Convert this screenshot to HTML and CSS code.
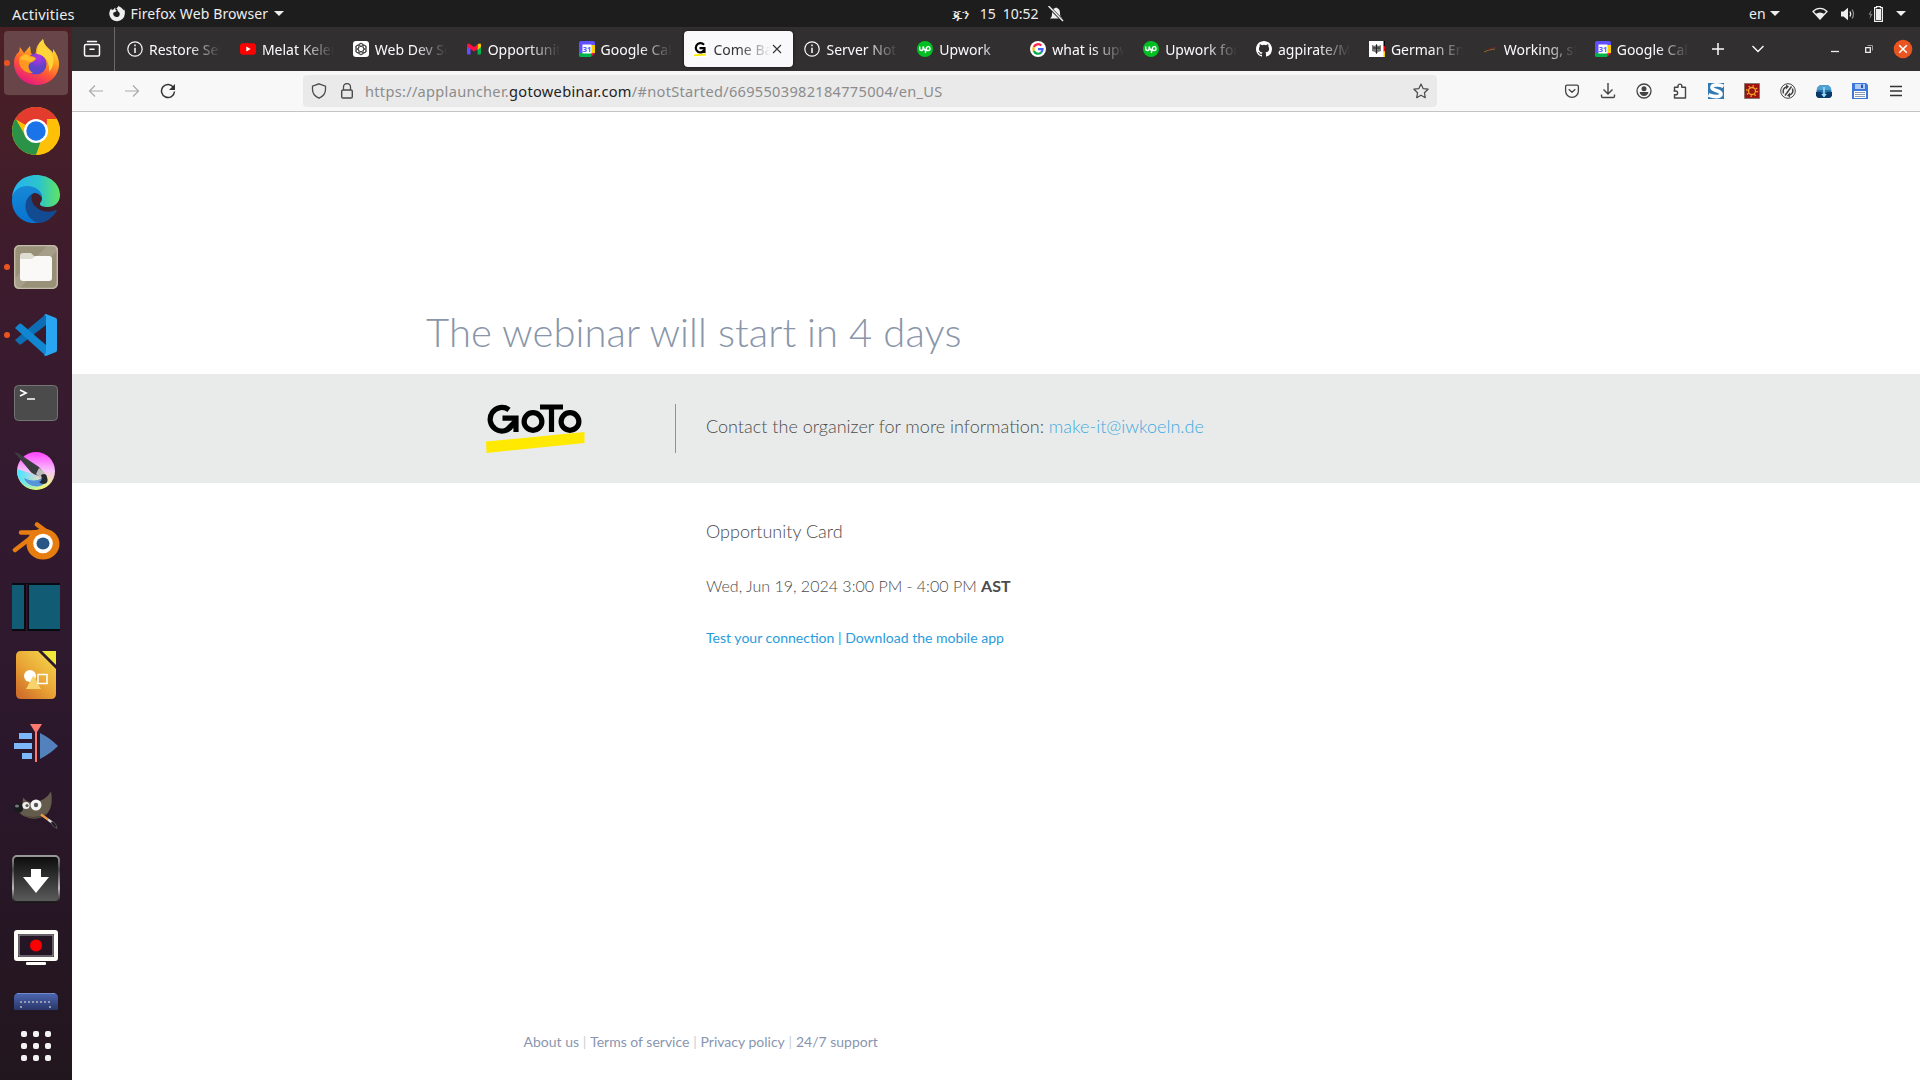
FILE: index.html
```html
<!DOCTYPE html>
<html lang="en">
<head>
<meta charset="utf-8">
<title>Come Back Later</title>
<link rel="stylesheet" href="styles.css">
</head>
<body>
<header class="panel">
  <span class="activities">Activities</span>
  <svg class="panel-fox" width="16" height="16" viewBox="0 0 16 16"><path fill="#eee" d="M7.2 2.4C8 1.700 9 1.600 9.100 0c2.500 1 4.400 2.500 5.400 4.300l.5-1c1 1.500 1 3 .8 4.700A7.800 7.800 0 0 1 .3 8.500C.2 6.200 1 4 2.200 2.600l.6 1.400 1.700-.4 1.700-2.100.3 2.400 1.200.8-1.500 1.400-1.700.4C4 7.400 4 9 5.400 10.200c1.600 1.300 4 1 5-.8.7-1.500.3-2.800-.9-3.700L8.600 5c.4-.9-.2-2-1.400-2.600z"/></svg>
  <span class="app-name">Firefox Web Browser</span>
  <i class="caret"></i>
  <div class="clock"><span class="month">ጁን</span><span class="day">15</span><span class="time">10:52</span>
    <svg width="16" height="16" viewBox="0 0 16 16"><path fill="#eee" d="M2 12.500c2-1.500 2-3 2-5.500 0-3 1.500-4.500 3.200-5a1 1 0 0 1 1.800 0C11 2.500 12 4.500 12 7c0 2.500.5 4 2.500 5.500z"/><path stroke="#1d1d1d" stroke-width="3" d="M0 0l15 15"/><path stroke="#eee" stroke-width="1.500" d="M.5 0l14.500 15"/></svg>
  </div>
  <div class="status">
    <span>en</span><i class="caret"></i>
    <svg class="wifi" width="16" height="14" viewBox="0 0 16 14"><path fill="none" stroke="#eee" stroke-width="1.300" d="M1 4.500C5 .3 11 .3 15 4.500L8 12z"/><path fill="#eee" d="M3.500 7c3-2 6-2 9 0L8 12.500z"/></svg>
    <svg class="volume" width="16" height="14" viewBox="0 0 16 14"><path fill="#eee" d="M1 4.500h2.500L8 .8v12.400L3.500 9.500H1z"/><path fill="none" stroke="#eee" stroke-width="1.400" d="M10 4.500q1.500 2.500 0 5"/><path fill="none" stroke="#888" stroke-width="1.300" d="M12 2.500q3 4.500 0 9"/></svg>
    <svg class="battery" width="16" height="16" viewBox="0 0 16 16"><path fill="#888" d="M3.500 4L.5 8.500h2L1.500 13l3-5h-2z"/><path fill="#eee" d="M8 3h5v11H8z"/><path fill="none" stroke="#eee" stroke-width="1.200" d="M6.600 1.600h1.900V.6h4v1h1.900v13.800H6.600z"/></svg>
    <i class="caret"></i>
  </div>
</header>

<div class="desktop">
<nav class="dock">
  <div class="dock-list">
    <div class="app running focused"><svg viewBox="0 0 48 48"><defs><linearGradient id="fx" x1=".8" y1="0" x2=".3" y2="1"><stop offset="0" stop-color="#fff44f"/><stop offset=".35" stop-color="#ffab1e"/><stop offset=".65" stop-color="#ff5634"/><stop offset="1" stop-color="#e31587"/></linearGradient><radialGradient id="fxg" cx=".6" cy=".2"><stop offset="0" stop-color="#b833e1"/><stop offset="1" stop-color="#5b45c9"/></radialGradient></defs><path fill="url(#fx)" d="M31 0c1 6 3 7 6 10 2 1 3 3 4 4v-4c4 5 6 10 6 15 0 12-10 21-22 21S2 37 2 24c0-5 2-9 5-11l1-5 4 6 6-7 1 7 3 3 2-4c0-6 4-10 7-13z"/><circle cx="24" cy="25" r="10.500" fill="url(#fxg)"/><path fill="#ff9821" d="M7 21c1-7 8-8 12-4 2 0 4 1 5 3-1 2-4 3-6 4-3 3-1 8 3 10-8 1-14-5-14-13z"/><path fill="#ffd43a" d="M25 15c0-6 3-10 6-15 1 7 5 8 8 13 4 7 3 15-2 20 1-7-2-17-12-18z"/><path fill="#ffbd2e" d="M8 20c2-4 7-6 10-2l6 1-5 4z"/></svg></div>
    <div class="app"><svg viewBox="0 0 48 48"><circle cx="24" cy="24" r="24" fill="#ffc107"/><path fill="#e33b2e" d="M24 24L3.200 12A24 24 0 0 1 44.800 12z"/><path fill="#2b9347" d="M3.500 11.500L14 30l10 6 5.500-4L24 48A24 24 0 0 1 3.500 11.500z"/><path fill="#ffc107" d="M24 48l10.500-18L35 12h9.800A24 24 0 0 1 24 48z"/><circle cx="24" cy="24" r="12" fill="#fff"/><circle cx="24" cy="24" r="9.700" fill="#1a73e8"/></svg></div>
    <div class="app"><svg viewBox="0 0 48 48"><defs><linearGradient id="eg"><stop offset="0" stop-color="#27b3f3"/><stop offset=".55" stop-color="#2bc3cd"/><stop offset="1" stop-color="#5fe463"/></linearGradient><linearGradient id="eb" x2="0" y2="1"><stop stop-color="#1689d5"/><stop offset="1" stop-color="#0873d1"/></linearGradient></defs><path fill="url(#eg)" d="M0 23C1 9 11 0 24 0c14 0 24 9 24 20 0 8-6 12-12 12-5 0-8-1-8-3 0-2 2-2 2-6 0-6-6-11-14-11C7 12 2 17 0 23z"/><path fill="url(#eb)" d="M0 24C1 16 7 11 15 11c9 0 15 5 15 12-2-4-5-5-8-5-6 3-9 8-7 15 2 8 8 12 15 14-17 5-31-7-30-23z"/><path fill="#124b91" d="M22 18c-4 2-3 9 1 13 5 6 14 7 21 4 1 0 1 1 0 2-4 6-9 10-17 11-13-2-20-23-5-30z"/></svg></div>
    <div class="app running"><svg viewBox="0 0 48 48"><rect x="2" y="2" width="44" height="44" rx="5" fill="#999078"/><path d="M2 36L36 2h5a5 5 0 0 1 5 5L7 46q-5 0-5-5z" fill="#a69e88"/><rect x="2.700" y="2.700" width="42.600" height="42.600" rx="5" fill="none" stroke="#c4bdaa" stroke-width="1.300"/><path d="M8 13q0-3 3-3h8l4 4-3 4H8z" fill="#dfdcd1"/><path fill="#faf9f7" d="M8 16h12l3-3h14q3 0 3 3v19q0 3-3 3H11q-3 0-3-3z"/></svg></div>
    <div class="app running"><svg viewBox="0 0 48 48"><path fill="#0d6db5" d="M3 29l4 4q1 1 2.500 0L34 14V3z"/><path fill="#1187d1" d="M3 17l4-4q1-1 2.500 0L34 34v11z"/><path fill="#29a5f2" d="M34 3l10 4q1 .5 1 2v30q0 1.500-1 2l-10 4q-1 0-2-1l2-2V5l-2-1z"/></svg></div>
    <div class="app"><svg viewBox="0 0 48 48"><rect x="2.500" y="6.500" width="43" height="35" rx="4" fill="#4b4b4b" stroke="#747474"/><path d="M8 11l6 3-6 3M15 20h8" fill="none" stroke="#fff" stroke-width="1.700"/></svg></div>
    <div class="app"><svg viewBox="0 0 48 48"><defs><linearGradient id="kr" x1=".5" y1="0" x2=".5" y2="1"><stop offset="0" stop-color="#ff42ff"/><stop offset=".5" stop-color="#f7c4fa"/><stop offset="1" stop-color="#edff65"/></linearGradient><linearGradient id="kc"><stop offset="0" stop-color="#3fe8ff"/><stop offset=".8" stop-color="#3fe8ff" stop-opacity="0"/></linearGradient></defs><circle cx="24" cy="24" r="19" fill="url(#kr)"/><path fill="url(#kc)" d="M5 22l19 6 12 10A19 19 0 0 1 5 22z"/><path fill="#5694dc" d="M12 31q10 5 18 0l4 3q-3 7-13 5-7-2-9-8z"/><path fill="#3b3c3f" d="M2 5l4 1 21 14 4 5-4 4q-7-2-9-5z"/><path fill="#bbb" d="M27 21l6 5-5 5-4-4z"/><path fill="#25282c" d="M29 28q5-3 6 2 2 6-3 7-3 0-5-2 4-1 2-7z"/></svg></div>
    <div class="app"><svg viewBox="0 -6 48 48"><path fill="none" stroke="#e77d10" stroke-width="4.500" stroke-linecap="round" stroke-linejoin="round" d="M25 3.500l12 9M9 11.500h24M3 29l17-13"/><ellipse cx="31" cy="23" rx="16.500" ry="15.500" fill="#e77d10"/><path fill="#e77d10" d="M20 9.300h14l8 7-22 11-4-9z"/><circle cx="31" cy="22.500" r="9.800" fill="#fff"/><ellipse cx="31" cy="22.500" rx="6.500" ry="6" fill="#265787"/></svg></div>
    <div class="app"><svg viewBox="0 0 48 48"><path fill="#050b10" d="M0 0h48v48H0z"/><path fill="#125b74" d="M0 2h12v44H0zM17 2h31v44H17z"/><path fill="#36132f" d="M14 1h1.500v47H14z"/></svg></div>
    <div class="app"><svg viewBox="0 0 48 48"><defs><linearGradient id="dr" x1="1" y1="0" x2=".2" y2="1"><stop stop-color="#f4de50"/><stop offset=".6" stop-color="#e9a334"/><stop offset="1" stop-color="#d0702a"/></linearGradient></defs><path fill="url(#dr)" d="M9 0h17l18 18v25q0 5-5 5H9q-5 0-5-5V5q0-5 5-5z"/><path fill="#f2e83a" d="M30 0h14v14z"/><circle cx="18" cy="25" r="6" fill="#fff"/><path d="M21.500 24.500L29 38H14z" fill="#f6d36d"/><rect x="26" y="23.500" width="9" height="9" fill="none" stroke="#fff" stroke-width="1.500"/></svg></div>
    <div class="app"><svg viewBox="0 0 48 48"><path fill="#7cb7fa" d="M7 14h13v6H7zM2 24h18v6H2zM10 34h10v6H10z"/><path fill="#5281bb" d="M28 14q10 5 18 13-8 8-18 13z"/><path fill="#fb7970" d="M18 5h12l-5 8v30h-2V13z"/></svg></div>
    <div class="app"><svg viewBox="0 -4.500 48 48"><path fill="#635b4c" d="M11 6q4 5 10 5 12-1 18-11 3 17-6 24-9 6-20 1-5-2-7-6 5-4 5-13z"/><path fill="#4a4338" d="M8 22q13 7 27 0-10 9-27 0z"/><ellipse cx="6.500" cy="16.500" rx="4.700" ry="5" fill="#191b1d"/><ellipse cx="5" cy="14.500" rx="2" ry="1.500" fill="#777"/><circle cx="14" cy="14" r="3.600" fill="#eee"/><circle cx="24" cy="13.500" r="5.500" fill="#f5f5f5"/><circle cx="15" cy="14" r="1.500" fill="#555"/><circle cx="24" cy="13.500" r="2.200" fill="#555"/><path stroke="#ee9a4d" stroke-width="2.300" d="M29 23l7 5"/><path stroke="#ddd" stroke-width="2.300" d="M36 28l4 3"/><path fill="#17191a" stroke="#777" stroke-width=".6" d="M40 30q4 1 5 7-5-2-6-6z"/></svg></div>
    <div class="app"><svg viewBox="0 0 48 48"><defs><linearGradient id="dl" x2="0" y2="1"><stop stop-color="#0b0b0b"/><stop offset="1" stop-color="#5c5c5c"/></linearGradient><linearGradient id="dlb" x2="0" y2="1"><stop stop-color="#999"/><stop offset=".3" stop-color="#444"/><stop offset=".7" stop-color="#bbb"/><stop offset="1" stop-color="#181818"/></linearGradient></defs><rect x="1" y="1" width="46" height="46" rx="4" fill="url(#dl)" stroke="url(#dlb)" stroke-width="2"/><path fill="#fff" d="M19 14h10v8h8L24 38 11 22h8z"/></svg></div>
    <div class="app"><svg viewBox="0 -1 48 48"><rect x="4" y="8" width="40" height="27" rx="1" fill="#251626" stroke="#fffef8" stroke-width="4"/><rect x="7" y="11" width="34" height="21" fill="none" stroke="#aaa"/><circle cx="24" cy="21.500" r="6" fill="#f00"/><rect x="14" y="38" width="20" height="3" rx="1" fill="#fffef8"/></svg></div>
    <div class="app"><svg viewBox="0 0 48 48"><defs><linearGradient id="kb" x2="0" y2="1"><stop stop-color="#4f69b5"/><stop offset="1" stop-color="#263263"/></linearGradient></defs><path fill="url(#kb)" d="M2 7q0-5 5-5h34q5 0 5 5v13H2z"/><path stroke="#7488c5" d="M5 2.500h38"/><path stroke="#969aaf" stroke-width="2" stroke-dasharray="2 2" d="M8 11h31M9 15v5M38 15v5"/></svg></div>
  </div>
  <div class="show-apps"><i></i><i></i><i></i><i></i><i></i><i></i><i></i><i></i><i></i></div>
</nav>

<section class="browser">
  <div class="tabbar">
    <div class="firefox-view"><svg width="18" height="18" viewBox="0 0 18 18"><path fill="none" stroke="#fbfbfe" stroke-width="1.500" stroke-linecap="round" d="M4.500 1.500h9M1.500 6q0-1.500 1.500-1.500h12q1.500 0 1.500 1.500v8.500q0 1.500-1.500 1.500H3q-1.500 0-1.500-1.500zM7 9.200h4"/></svg></div>
    <div class="tab"><svg class="fav" viewBox="0 0 16 16"><circle cx="8" cy="8" r="7.200" fill="none" stroke="#fbfbfe" stroke-width="1.200"/><path stroke="#fbfbfe" stroke-width="1.500" d="M8 3.500v1.800M8 6.700v5.300"/></svg><span>Restore Session</span></div>
    <div class="tab"><svg class="fav" viewBox="0 0 16 16"><rect y="2.300" width="16" height="11.400" rx="3" fill="#f00"/><path fill="#fff" d="M6.300 5.500v5L10.700 8z"/></svg><span>Melat Kelemwork</span></div>
    <div class="tab"><svg class="fav" viewBox="0 0 16 16"><rect width="16" height="16" rx="3" fill="#fff"/><g fill="none" stroke="#333" stroke-width=".8"><ellipse cx="8" cy="8" rx="2.500" ry="5.900"/><ellipse cx="8" cy="8" rx="2.500" ry="5.900" transform="rotate(60 8 8)"/><ellipse cx="8" cy="8" rx="2.500" ry="5.900" transform="rotate(120 8 8)"/><circle cx="8" cy="8" r="5.300"/></g></svg><span>Web Dev Schedule</span></div>
    <div class="tab"><svg class="fav" viewBox="0 0 16 16"><path fill="#6150ff" d="M1 4l3.500 2v7.500H2q-1 0-1-1z"/><path fill="#00b34a" d="M11.500 6L15 4v8.500q0 1-1 1h-2.500z"/><path fill="#ffc400" d="M11.500 3.500q3.500-2 3.500.5v2l-3.500 3z"/><path fill="#f14" d="M1 5q0-4 3.500-1.500L8 6l3.500-2.500V8L8 10.500 1 5.500z"/></svg><span>Opportunity Card</span></div>
    <div class="tab"><svg class="fav" viewBox="0 0 16 16"><path fill="#6150ff" d="M0 2q0-2 2-2h12q2 0 2 2v2H4v12H2q-2 0-2-2z"/><path fill="#fc0" d="M12 4h4v8h-4z"/><path fill="#00b34a" d="M0 12h12v4H2q-2 0-2-2z"/><path fill="#f14" d="M12 12h4l-4 4z"/><path fill="#fff" d="M3.500 3.500h9v9h-9z"/><text x="8" y="10.700" font-size="7.500" font-weight="700" text-anchor="middle" fill="#6150ff">31</text></svg><span>Google Calendar</span></div>
    <div class="tab active"><svg class="fav" viewBox="0 0 16 16"><path fill="#fff" d="M0 0h16v16H0z"/><path fill="none" stroke="#050505" stroke-width="2.200" d="M12 3.700A4.700 4.700 0 1 0 8 11.500q3 0 4-2.500M7.500 7.200h5V12"/><path fill="#ffe900" d="M2 13.500l12-1v2L2 15.300z"/></svg><span>Come Back Later</span><svg class="close" width="10" height="10" viewBox="0 0 10 10"><path stroke="#333" stroke-width="1.100" d="M1 1l8 8M9 1L1 9"/></svg></div>
    <div class="tab"><svg class="fav" viewBox="0 0 16 16"><circle cx="8" cy="8" r="7.200" fill="none" stroke="#fbfbfe" stroke-width="1.200"/><path stroke="#fbfbfe" stroke-width="1.500" d="M8 3.500v1.800M8 6.700v5.300"/></svg><span>Server Not Found</span></div>
    <div class="tab"><svg class="fav" viewBox="0 0 16 16"><circle cx="8" cy="8" r="8" fill="#00bf22"/><path fill="none" stroke="#fff" stroke-width="1.400" d="M2.700 5.500v2q0 2 1.700 2t1.700-2v-2q.8 3.500 2.800 4M8.300 12l1-4.500q.4-2 2-2t1.700 2-1.700 2q-1.400 0-2.400-1"/></svg><span>Upwork</span></div>
    <div class="tab"><svg class="fav" viewBox="0 0 16 16"><circle cx="8" cy="8" r="8" fill="#fff"/><g fill="none" stroke-width="2.200"><path stroke="#f24" d="M3.800 6A4.700 4.700 0 0 1 11.300 4.500"/><path stroke="#fb0" d="M3.800 6a5 5 0 0 0 0 4"/><path stroke="#0a4" d="M3.800 10a4.700 4.700 0 0 0 7.300 1.600"/><path stroke="#46f" d="M11.100 11.600q1.500-1.500 1.500-3.500H8"/></g></svg><span>what is upwork</span></div>
    <div class="tab"><svg class="fav" viewBox="0 0 16 16"><circle cx="8" cy="8" r="8" fill="#00bf22"/><path fill="none" stroke="#fff" stroke-width="1.400" d="M2.700 5.500v2q0 2 1.700 2t1.700-2v-2q.8 3.500 2.800 4M8.300 12l1-4.500q.4-2 2-2t1.700 2-1.700 2q-1.400 0-2.400-1"/></svg><span>Upwork for All</span></div>
    <div class="tab"><svg class="fav" viewBox="0 0 16 16"><path fill="#fff" fill-rule="evenodd" d="M8 0C3.580 0 0 3.580 0 8c0 3.540 2.290 6.530 5.470 7.590.4.070.55-.17.55-.38 0-.19-.01-.82-.01-1.490-2.010.37-2.530-.49-2.690-.94-.09-.23-.48-.94-.82-1.130-.28-.15-.68-.52-.01-.53.63-.01 1.080.58 1.230.82.72 1.210 1.870.87 2.330.66.070-.52.280-.87.510-1.070-1.780-.2-3.640-.89-3.640-3.950 0-.87.310-1.590.82-2.150-.08-.2-.36-1.020.080-2.120 0 0 .67-.21 2.200.82a7.600 7.600 0 0 1 4 0c1.530-1.040 2.200-.82 2.200-.82.440 1.100.160 1.920.080 2.120.510.560.82 1.270.82 2.150 0 3.070-1.870 3.750-3.650 3.950.290.250.540.73.540 1.480 0 1.070-.01 1.930-.01 2.200 0 .210.150.460.550.380A8 8 0 0 0 16 8c0-4.420-3.580-8-8-8z"/></svg><span>agpirate/Motion</span></div>
    <div class="tab"><svg class="fav" viewBox="0 0 16 16"><path fill="#fff" d="M0 0h16v16H0z"/><path d="M14.500 0H16v5h-1.500z"/><path fill="#e00" d="M14.500 5H16v5.500h-1.500z"/><path fill="#fc0" d="M14.500 10.500H16V16h-1.500z"/><path fill="#777" d="M3 4l3 1 1.500-2L9 5l3-1v6l-3 1-1.500 2L6 11l-3-1z"/><path stroke="#222" d="M7.500 3.500v9M4 7h7"/></svg><span>German Embassy</span></div>
    <div class="tab"><svg class="fav" viewBox="0 0 16 16"><path fill="none" stroke="#94691f" d="M2 11l5-2 6-1"/><path fill="none" stroke="#71232a" d="M6 8.500L14 6"/></svg><span>Working, studying</span></div>
    <div class="tab"><svg class="fav" viewBox="0 0 16 16"><path fill="#6150ff" d="M0 2q0-2 2-2h12q2 0 2 2v2H4v12H2q-2 0-2-2z"/><path fill="#fc0" d="M12 4h4v8h-4z"/><path fill="#00b34a" d="M0 12h12v4H2q-2 0-2-2z"/><path fill="#f14" d="M12 12h4l-4 4z"/><path fill="#fff" d="M3.500 3.500h9v9h-9z"/><text x="8" y="10.700" font-size="7.500" font-weight="700" text-anchor="middle" fill="#6150ff">31</text></svg><span>Google Calendar</span></div>
    <div class="tab-tools">
      <svg width="14" height="14" viewBox="0 0 14 14"><path stroke="#fbfbfe" stroke-width="1.500" d="M7 1v12M1 7h12"/></svg>
      <svg class="all-tabs" width="14" height="14" viewBox="0 0 14 14"><path fill="none" stroke="#fbfbfe" stroke-width="1.400" d="M1.500 4L7 9.500 12.500 4"/></svg>
    </div>
    <div class="window-buttons">
      <svg width="10" height="10" viewBox="0 0 10 10"><path stroke="#eee" stroke-width="1.300" d="M1 7.500h8"/></svg>
      <svg width="10" height="10" viewBox="0 0 10 10"><path fill="none" stroke="#eee" stroke-width="1.300" d="M1.700 3.700h4.600v4.600H1.700z"/><path fill="none" stroke="#999" d="M3.500 1.500h5v5"/></svg>
      <svg class="close-window" width="20" height="20" viewBox="0 0 20 20"><circle cx="10" cy="10" r="9.300" fill="#e95420"/><path stroke="#fff" stroke-width="1.600" d="M6.200 6.200l7.600 7.600M13.800 6.200l-7.600 7.600"/></svg>
    </div>
  </div>

  <div class="toolbar">
    <div class="tool"><svg viewBox="0 0 16 16"><path fill="none" stroke="#aaa" stroke-width="1.200" d="M15 8H2M7 2.500L1.500 8 7 13.500"/></svg></div>
    <div class="tool"><svg viewBox="0 0 16 16"><path fill="none" stroke="#aaa" stroke-width="1.200" d="M1 8h13M9 2.500L14.500 8 9 13.500"/></svg></div>
    <div class="tool"><svg viewBox="0 0 16 16"><path fill="none" stroke="#333" stroke-width="1.500" d="M13.500 4.500A6.500 6.500 0 1 0 14.500 8.500"/><path fill="#333" d="M15 1v6H9z"/></svg></div>
    <div class="urlbar">
      <svg viewBox="0 0 16 16"><path fill="none" stroke="#4b4b4b" stroke-width="1.300" d="M8 .8l6.500 2.400v3.300c0 4-2.500 7-6.500 8.700-4-1.700-6.500-4.700-6.500-8.700V3.200z"/></svg>
      <svg viewBox="0 0 16 16"><path fill="none" stroke="#4b4b4b" stroke-width="1.300" d="M4.500 7V4a3.500 3.500 0 0 1 7 0v3"/><rect x="2.700" y="7" width="10.600" height="8" rx="1.300" fill="none" stroke="#4b4b4b" stroke-width="1.400"/></svg>
      <div class="url">https://applauncher.<b>gotowebinar.com</b>/#notStarted/6695503982184775004/en_US</div>
      <svg viewBox="0 0 16 16"><path fill="none" stroke="#4b4b4b" stroke-width="1.200" stroke-linejoin="round" d="M8 1l2.100 4.600 5 .6-3.700 3.500.9 5L8 12.300l-4.300 2.400.9-5L.9 6.200l5-.6z"/></svg>
    </div>
    <div class="extensions">
      <div class="tool"><svg viewBox="0 0 16 16"><path fill="none" stroke="#444" stroke-width="1.300" stroke-linejoin="round" d="M3 2.200h10q1.400 0 1.400 1.400V8A6.400 6.400 0 0 1 1.600 8V3.600q0-1.400 1.400-1.400zM4.700 6.200L8 9.200l3.300-3"/></svg></div>
      <div class="tool"><svg viewBox="0 0 16 16"><path fill="none" stroke="#444" stroke-width="1.400" d="M8 0v10.500M3.500 6.500L8 11l4.500-4.500M1.500 11.500v1.700q0 1.300 1.300 1.300h10.400q1.300 0 1.300-1.300v-1.700"/></svg></div>
      <div class="tool"><svg viewBox="0 0 16 16"><circle cx="8" cy="8" r="7" fill="none" stroke="#444" stroke-width="1.300"/><circle cx="8" cy="5.700" r="2.500" fill="#444"/><path fill="#444" d="M3.500 9h9q-1 4-4.500 4T3.500 9z"/></svg></div>
      <div class="tool"><svg viewBox="0 0 16 16"><path fill="none" stroke="#444" stroke-width="1.400" stroke-linejoin="round" d="M2.500 7.500V4.300H6V3a1.900 1.900 0 0 1 3.800 0v1.300h3.700V15h-11v-3.200h1.200a1.900 1.900 0 0 0 0-3.800H1.500"/></svg></div>
      <div class="tool"><svg viewBox="0 0 16 16"><path fill="#347ab2" d="M0 0h16v16H0z"/><path fill="none" stroke="#fff" stroke-width="3.700" d="M15.500 3.500C11 1 4 1.500 4 4.500c0 3.500 9 2.500 9 6.500 0 3-6 3.500-12.500 1"/></svg></div>
      <div class="tool"><svg viewBox="0 0 16 16"><path fill="#9d1111" stroke="#8a7770" d="M.5.5h15v15H.5z"/><circle cx="8" cy="8" r="3.500" fill="none" stroke="#f0a528" stroke-width="1.300"/><circle cx="8" cy="8" r="5.100" fill="none" stroke="#f0a528" stroke-width="1.900" stroke-dasharray="1.300 2.700"/></svg></div>
      <div class="tool"><svg viewBox="0 0 16 16"><circle cx="8" cy="8" r="7.300" fill="none" stroke="#444"/><path fill="none" stroke="#444" stroke-width="1.500" d="M3.500 10.500q-1.500-5 3-6.500M12.500 5.500q1.500 5-3 6.500M5 12.500l6.500-9"/><path fill="#444" d="M6 1.500l3 2-3 3zM10 14.500l-3-2 3-3z"/></svg></div>
      <div class="tool"><svg viewBox="0 0 16 16"><path fill="#276ea7" d="M1 5l3-3h8l3 3 1 8H0z"/><path fill="#4fa0d2" d="M1 5l3-3h8l3 3v2H1z"/><path fill="#093967" d="M0 9h5l3 3 3-3h5v4l-2 2H2l-2-2z"/><path fill="#9bdcf8" d="M7.200 4h1.600v7h2L8 14.500 5.200 11h2z"/></svg></div>
      <div class="tool"><svg viewBox="0 0 16 16"><path fill="#3d77d8" d="M0 0h14l2 2v14H0z"/><path fill="#adc9f4" d="M3 1h10v5H3z"/><path fill="#2858b0" d="M9 1.500h2V5H9z"/><path fill="#fff" d="M2 8h12v7H2z"/><path stroke="#8b9bb3" d="M3 9.500h10M3 11.500h10M3 13.500h10"/></svg></div>
      <div class="tool"><svg viewBox="0 0 16 16"><path stroke="#333" stroke-width="1.300" d="M2 3.500h12M2 8h12M2 12.500h12"/></svg></div>
    </div>
  </div>

  <main class="page">
    <h1>The webinar will start in 4 days</h1>
    <div class="organizer">
      <svg class="goto-logo" width="99" height="49" viewBox="0 0 99 49" role="img" aria-label="GoTo"><g fill="none" stroke="#000" stroke-width="5.200"><path d="M23 5.800A11.800 11.800 0 1 0 26 21.500M16.500 14.200H30V28"/><ellipse cx="47" cy="17.500" rx="8.900" ry="8.800"/><path d="M54 3h23M65.500 3v25"/><ellipse cx="84" cy="17.500" rx="8.900" ry="8.800"/></g><path d="M18 25l10-10 4 1v12h-4v-6l-7 5z"/><path fill="#ffe900" d="M0 37.500L98.500 28v11L.5 49z"/></svg>
      <p>Contact the organizer for more information: <a>make-it@iwkoeln.de</a></p>
    </div>
    <div class="details">
      <p class="title">Opportunity Card</p>
      <p class="date">Wed, Jun 19, 2024 3:00 PM - 4:00 PM <b>AST</b></p>
      <p class="links"><a>Test your connection</a> | <a>Download the mobile app</a></p>
    </div>
    <footer><a>About us</a><i>|</i><a>Terms of service</a><i>|</i><a>Privacy policy</a><i>|</i><a>24/7 support</a></footer>
  </main>
</section>
</div>
</body>
</html>
```
FILE: styles.css
```css
* { box-sizing: border-box; }
body {
  margin: 0;
  width: 1920px;
  height: 1080px;
  overflow: hidden;
  display: flex;
  flex-direction: column;
  font: 14px/20px "Noto Sans", sans-serif;
  background: #fff;
}
svg { display: block; flex: none; }

/* GNOME panel */
.panel {
  height: 27px;
  display: flex;
  align-items: center;
  padding: 0 14px 0 12px;
  background: #1d1d1d;
  color: #eee;
  white-space: nowrap;
}
.activities { width: 97px; font-size: 14.6px; letter-spacing: .2px; }
.panel-fox { margin-right: 6px; }
.app-name { width: 144px; letter-spacing: .12px; }
.caret {
  width: 0;
  height: 0;
  border: 5px solid transparent;
  border-top-color: #eee;
  border-bottom: 0;
}
.clock { display: flex; align-items: center; width: 801px; margin-left: 668px; }
.month { width: 28px; font-size: 14px; }
.day { width: 23px; }
.time { width: 45px; }
.status { display: flex; align-items: center; }
.status span { width: 21px; }
.wifi { margin-left: 32px; }
.volume { margin-left: 12px; }
.battery { margin: 0 12px 0 12px; }

.desktop { flex: 1; min-height: 0; display: flex; }

/* Dock */
.dock {
  width: 72px;
  display: flex;
  flex-direction: column;
  background: linear-gradient(#4b2025, #3c1b2d 25%, #321a30 45%, #2b172b 70%, #22161e);
}
.dock-list { height: 983px; padding-top: 2px; overflow: hidden; flex: none; }
.app {
  height: 68px;
  display: flex;
  align-items: center;
  justify-content: center;
  position: relative;
}
.app svg { width: 48px; height: 48px; position: relative; }
.focused::before {
  content: "";
  position: absolute;
  inset: 2px 4px;
  border-radius: 4px;
  background: #674548;
}
.running::after {
  content: "";
  position: absolute;
  left: 4px;
  top: 31px;
  width: 6px;
  height: 6px;
  border-radius: 50%;
  background: #e95420;
}
.show-apps {
  display: grid;
  grid-template-columns: repeat(3, 6px);
  gap: 6px;
  padding: 21px;
}
.show-apps i { height: 6px; border-radius: 2px; background: #f2f2f2; }

/* Browser chrome */
.browser { flex: 1; min-width: 0; display: flex; flex-direction: column; }
.tabbar { height: 44px; display: flex; align-items: center; background: #322f30; color: #fbfbfe; }
.firefox-view {
  width: 43px;
  height: 44px;
  padding: 13px 0 0 11px;
  border-right: 1px solid #6b696a;
}
.firefox-view + .tab { margin-left: 3px; }
.tab {
  width: 112.9px;
  height: 36px;
  display: flex;
  align-items: center;
  padding: 0 10px 0 9px;
  flex: none;
}
.fav { width: 16px; height: 16px; margin-right: 6px; }
.tab span {
  flex: 1;
  min-width: 0;
  padding-top: 1px;
  overflow: hidden;
  white-space: nowrap;
  -webkit-mask-image: linear-gradient(to left, transparent, #000 32px);
  mask-image: linear-gradient(to left, transparent, #000 32px);
}
.tab.active {
  width: 109px;
  margin: 0 2px;
  padding: 0 11px 0 8px;
  border-radius: 4px;
  background: #f9f9fb;
  color: #333;
  box-shadow: 0 0 3px #111;
}
.active .fav { margin-right: 5px; }
.close { margin-left: 1px; }
.tab-tools { display: flex; margin-left: 12px; }
.all-tabs { margin-left: 26px; }
.window-buttons { display: flex; align-items: center; gap: 24px; margin-left: auto; padding-right: 7px; }
.window-buttons .close-window { margin-left: -5px; }

.toolbar {
  height: 41px;
  display: flex;
  align-items: center;
  padding: 0 6px;
  background: #f8f8f8;
  border-bottom: 1px solid #c4c4c4;
}
.tool { width: 36px; display: flex; justify-content: center; }
.tool svg, .urlbar svg { width: 16px; height: 16px; }
.urlbar {
  width: 1134px;
  height: 32px;
  margin-left: 117px;
  padding: 0 8px;
  display: flex;
  align-items: center;
  gap: 12px;
  border-radius: 4px;
  background: #eaeaea;
}
.url {
  flex: 1;
  margin-left: -2px;
  font-size: 14.6px;
  letter-spacing: .29px;
  color: #8c8c8c;
  white-space: nowrap;
}
.url b { font-weight: 400; color: #222; }
.extensions { display: flex; margin-left: auto; }

/* GoToWebinar page */
.page {
  flex: 1;
  display: flex;
  flex-direction: column;
  font-family: Lato, sans-serif;
  font-weight: 300;
  color: #4c4c4c;
}
.page p, .page h1 { margin: 0; }
.page h1 {
  margin: 196px 0 18px;
  padding-left: 354px;
  font-size: 40px;
  line-height: 48px;
  letter-spacing: .08px;
  font-weight: 300;
  color: #8995a9;
}
.organizer {
  height: 109px;
  display: flex;
  align-items: center;
  padding-left: 414px;
  background: #e9ebea;
}
.organizer p {
  margin-left: 90px;
  padding-left: 30px;
  border-left: 1px solid #8a93a3;
  height: 49px;
  font-size: 18.03px;
  line-height: 44px;
}
.organizer a { color: #3fa9e0; }
.details { padding: 36px 0 0 634px; flex: 1; }
.title { font-size: 18px; line-height: 24px; }
.date { font-size: 16.03px; line-height: 24px; padding-top: 31px; }
.date b { font-weight: 700; }
.links { font-size: 14.05px; line-height: 20px; padding-top: 30px; font-weight: 400; }
.links, .links a { color: #2a9cdc; }
footer {
  padding: 0 0 28px 451.500px;
  display: flex;
  gap: 3.800px;
  font-size: 14px;
  line-height: 20px;
  font-weight: 400;
  color: #8995b0;
}
footer i { font-style: normal; color: #c9ced8; }
```
